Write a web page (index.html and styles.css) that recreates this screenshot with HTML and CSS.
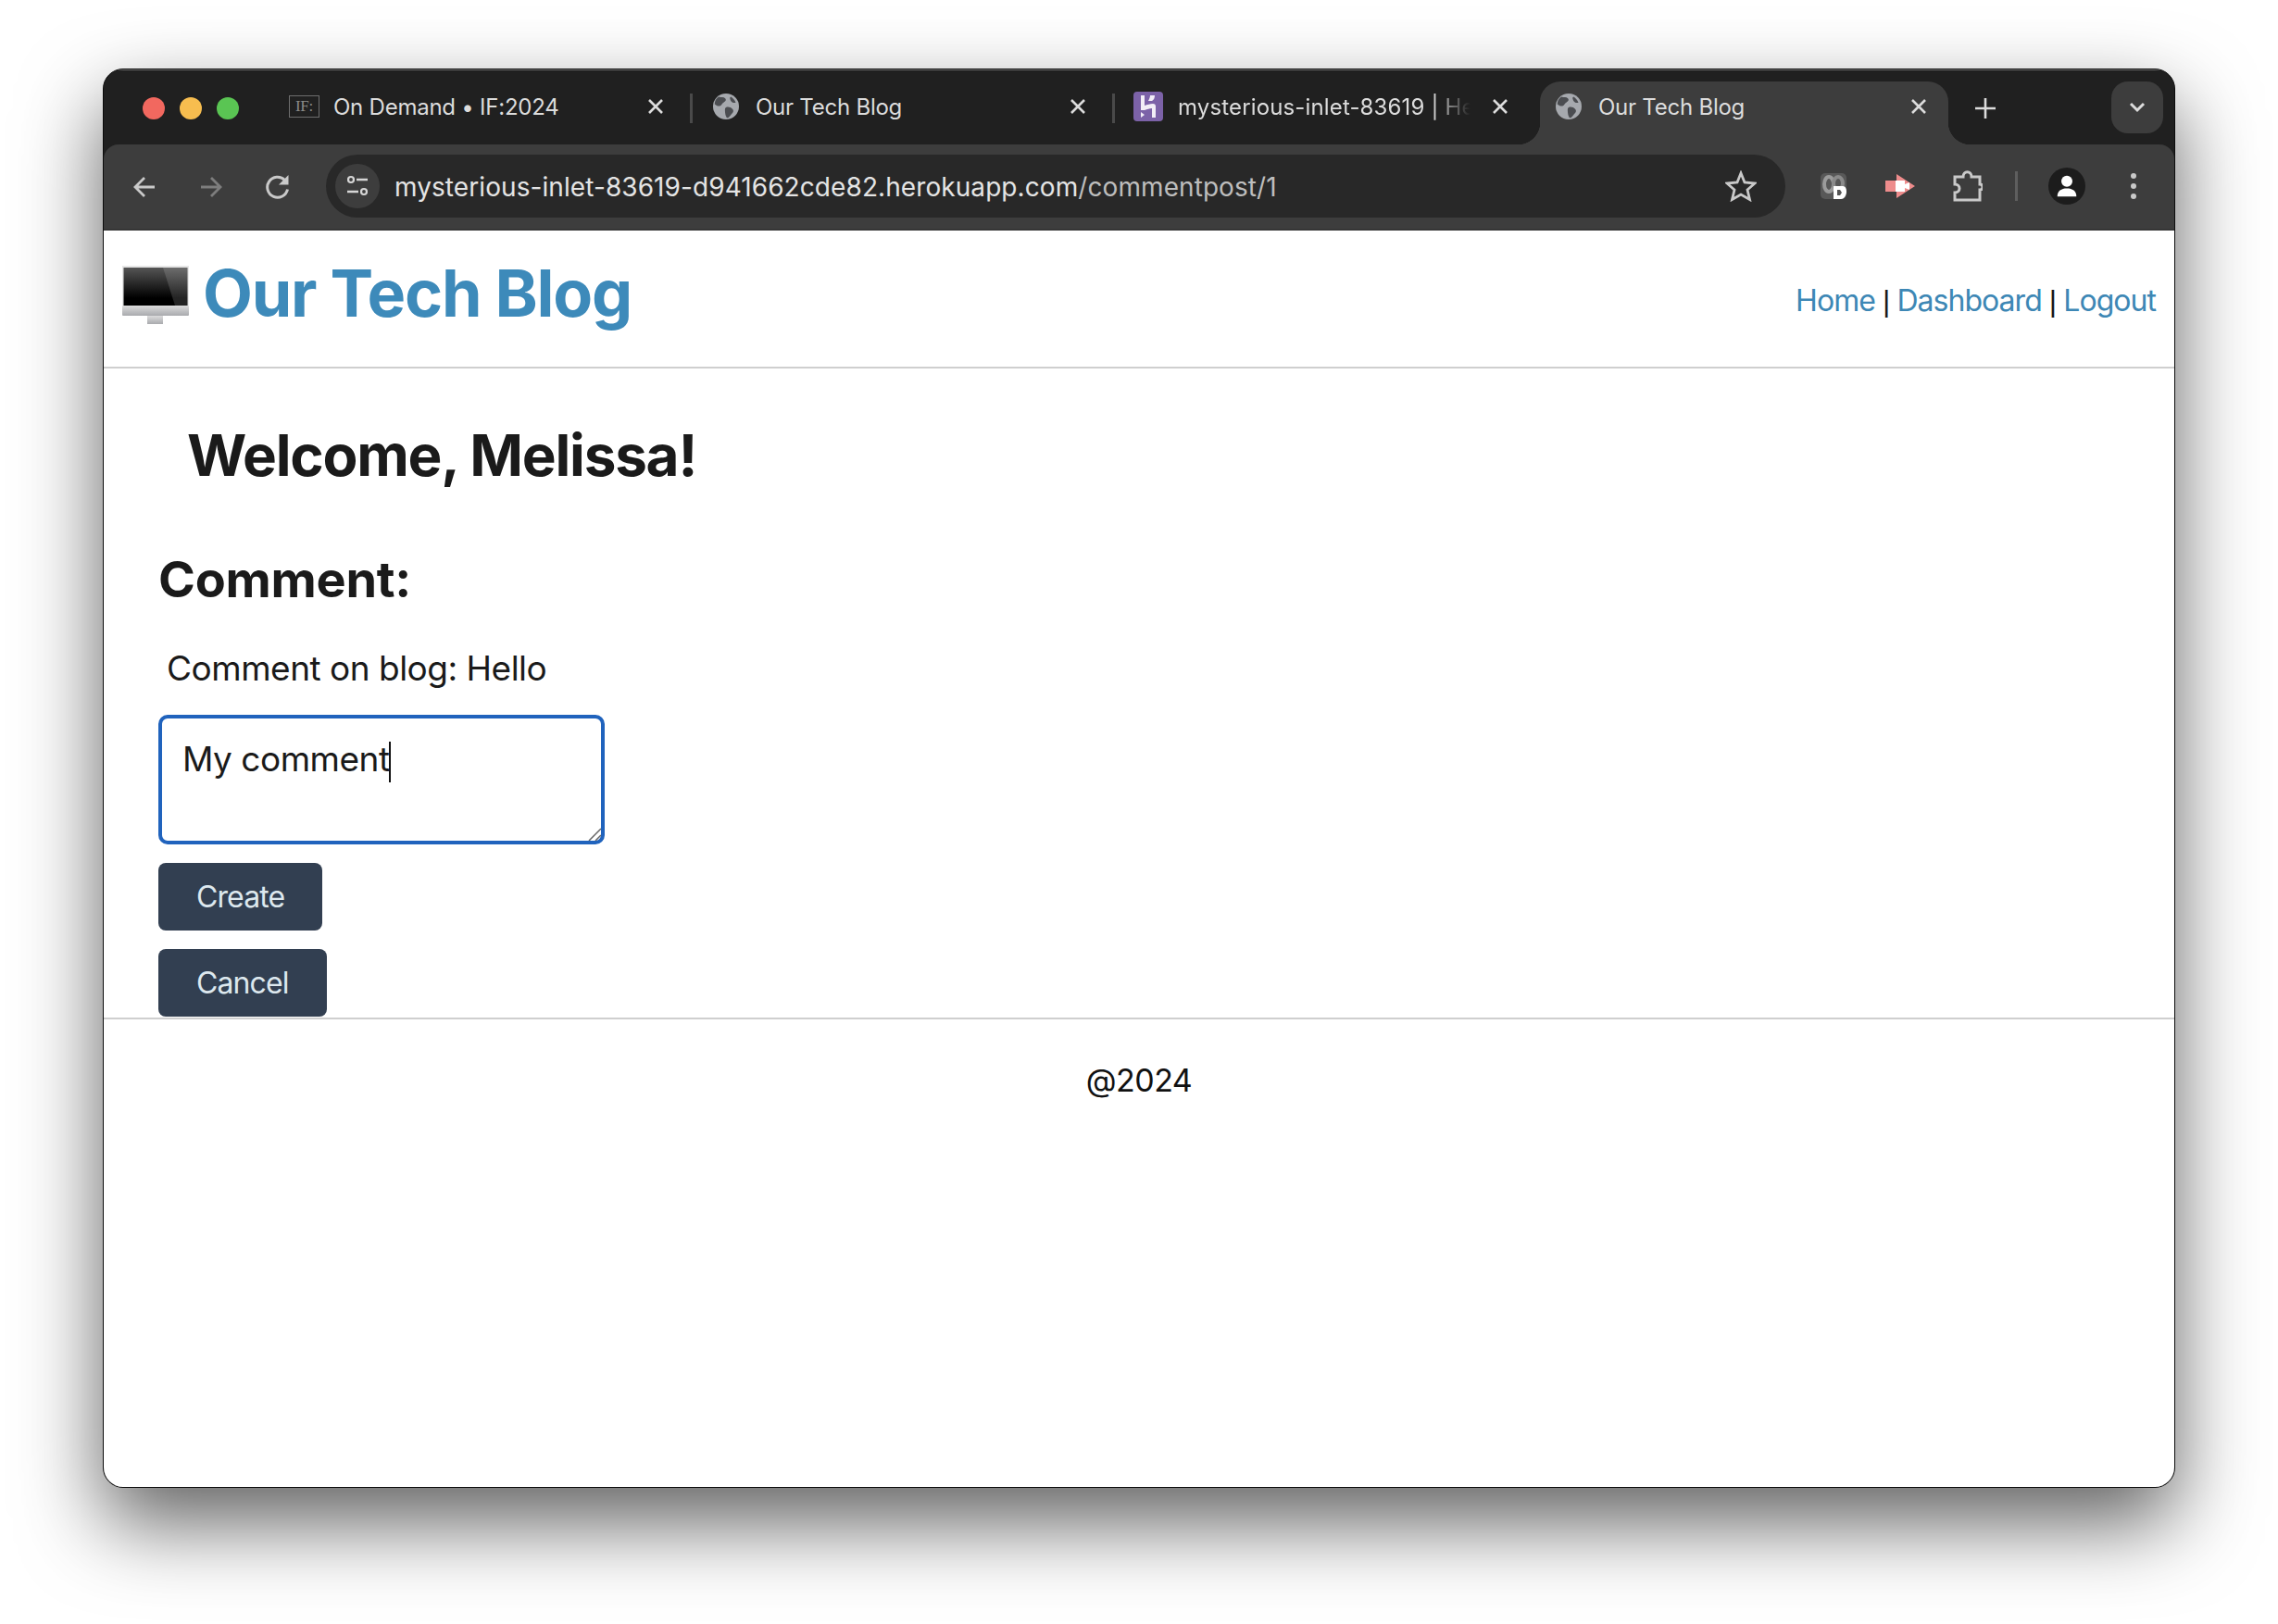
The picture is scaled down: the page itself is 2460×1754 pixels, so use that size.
FILE: index.html
```html
<!DOCTYPE html>
<html lang="en">
<head>
    <meta charset="UTF-8">
    <title>Our Tech Blog</title>
    <link rel="stylesheet" href="styles.css">
</head>
<body>
    <svg class="defs" width="0" height="0">
        <defs>
            <g id="globe">
                <circle cx="16" cy="16" r="16" fill="#a6a9ae"/>
                <path d="M7 4c3 1 6 0 8 2s0 4-2 5-2 3-4 4-5 0-7-2c0-4 2-7 5-9zM16 17c3-1 6 0 8 2s1 4-1 6-3 5-6 5c-1-2-2-4-2-6s-1-6 1-7zM22 4c2 1 5 4 6 7-2 1-5 0-6-2s-2-4 0-5z" fill="#4b4d51"/>
            </g>
            <path id="close" d="M2 2l14 14M16 2L2 16" fill="none" stroke="#dcdcdc" stroke-width="2.6"/>
        </defs>
    </svg>
    <div class="window">
        <div class="tabstrip">
            <div class="lights">
                <span class="light red"></span>
                <span class="light yellow"></span>
                <span class="light green"></span>
            </div>
            <div class="tab first">
                <span class="if-icon">IF:</span>
                <span class="tab-title">On Demand • IF:2024</span>
                <svg class="tab-close" viewBox="0 0 18 18"><use href="#close"/></svg>
            </div>
            <div class="tab-sep"></div>
            <div class="tab globe-tab">
                <svg class="favicon" viewBox="0 0 32 32"><use href="#globe"/></svg>
                <span class="tab-title">Our Tech Blog</span>
                <svg class="tab-close" viewBox="0 0 18 18"><use href="#close"/></svg>
            </div>
            <div class="tab-sep"></div>
            <div class="tab">
                <svg class="favicon" viewBox="0 0 32 32">
                    <rect width="32" height="32" rx="4" fill="#7c62a8"/>
                    <path d="M8 4h4v11c3-1 6-2 9-2 2 0 3 1 3 3v12h-4V18c-3 0-5 1-8 2H8zM18 4h5c0 3-1 5-3 6h-4c1-2 2-4 2-6zM8 22l4 3-4 3z" fill="#f2eef7"/>
                </svg>
                <span class="tab-title fade">mysterious-inlet-83619 | Heroku</span>
                <svg class="tab-close" viewBox="0 0 18 18"><use href="#close"/></svg>
            </div>
            <div class="tab globe-tab active">
                <svg class="favicon" viewBox="0 0 32 32"><use href="#globe"/></svg>
                <span class="tab-title">Our Tech Blog</span>
                <svg class="tab-close" viewBox="0 0 18 18"><use href="#close"/></svg>
            </div>
            <svg class="new-tab" viewBox="0 0 22 22"><path d="M11 0v22M0 11h22" stroke="#dcdcdc" stroke-width="2.6"/></svg>
            <div class="tab-search">
                <svg viewBox="0 0 18 12"><path d="M2 2l7 7 7-7" fill="none" stroke="#dcdcdc" stroke-width="3"/></svg>
            </div>
        </div>

        <div class="toolbar">
            <div class="nav-buttons">
                <svg class="nav-icon" viewBox="0 0 26 26"><path d="M24 13H4M13 3L3 13l10 10" fill="none" stroke="#c9c9c9" stroke-width="2.8"/></svg>
                <svg class="nav-icon" viewBox="0 0 26 26"><path d="M2 13h20M13 3l10 10-10 10" fill="none" stroke="#7d7d7d" stroke-width="2.8"/></svg>
                <svg class="nav-icon" viewBox="0 0 26 26"><path d="M23.500 15.500A11 11 0 1 1 20.500 5.500" fill="none" stroke="#c9c9c9" stroke-width="3"/><path d="M24.500 0v10.500H14z" fill="#c9c9c9"/></svg>
            </div>
            <div class="omnibox">
                <span class="site-settings">
                    <svg viewBox="0 0 26 26"><circle cx="6" cy="6" r="3" fill="none" stroke="#d6d6d6" stroke-width="2.200"/><path d="M12 6h12M2 19h12" stroke="#d6d6d6" stroke-width="2.400"/><circle cx="20" cy="19" r="3" fill="none" stroke="#d6d6d6" stroke-width="2.200"/></svg>
                </span>
                <span class="url">mysterious-inlet-83619-d941662cde82.herokuapp.com<span class="url-path">/commentpost/1</span></span>
                <svg class="star" viewBox="0 0 34 34"><path d="M17 3l4 10 11 1-8 7 2.500 10.500L17 26l-9.500 5.500L10 21l-8-7 11-1z" fill="none" stroke="#c9c9c9" stroke-width="2.800"/></svg>
            </div>
            <div class="extensions">
                <span class="ext-loom">
                    <svg viewBox="0 0 28 28">
                        <rect width="28" height="28" rx="5" fill="#585858"/>
                        <ellipse cx="9" cy="12" rx="5" ry="8" fill="none" stroke="#9b9b9b" stroke-width="4"/>
                        <ellipse cx="19" cy="11" rx="5" ry="7" fill="none" stroke="#8a8a8a" stroke-width="4"/>
                        <path d="M14 14h10c3 0 4 3 4 6s-2 8-6 8h-8z" fill="#fff"/>
                        <path d="M18 18h3l2 3-2 3h-3z" fill="#555"/>
                    </svg>
                </span>
                <svg class="ext-video" viewBox="0 0 32 26">
                    <path d="M12 0l20 13-20 13v-7H0V7h12z" fill="#ee8c8c"/>
                    <path d="M11 7h10v12H11z" fill="#fff"/>
                    <path d="M21 11l5-2v8l-5-2z" fill="#fff"/>
                </svg>
                <svg class="ext-puzzle" viewBox="0 0 32 34"><path d="M2 7h9c0-7 9-7 9 0h9v8c4 0 4 6 0 6v11H2v-8c3 0 5-2 5-4.500S5 15 2 15z" fill="none" stroke="#c9c9c9" stroke-width="3"/></svg>
                <span class="toolbar-sep"></span>
                <span class="avatar">
                    <svg viewBox="0 0 26 28"><circle cx="13" cy="8" r="7" fill="#fff"/><path d="M1 27c0-7 5-10 12-10s12 3 12 10z" fill="#fff"/></svg>
                </span>
                <span class="menu-dots"><i></i><i></i><i></i></span>
            </div>
        </div>

        <div class="page">
            <header class="site-header">
                <a class="brand" href="#">
                    <svg class="brand-icon" viewBox="0 0 72 63">
                        <defs>
                            <linearGradient id="screen" x1="0" y1="0" x2="0" y2="1">
                                <stop offset="0" stop-color="#555"/>
                                <stop offset="0.8" stop-color="#000"/>
                            </linearGradient>
                            <linearGradient id="chin" x1="0" y1="0" x2="0" y2="1">
                                <stop offset="0" stop-color="#dcdcdc"/>
                                <stop offset="1" stop-color="#a9aaae"/>
                            </linearGradient>
                        </defs>
                        <rect x="0" y="0" width="72" height="43" fill="#e6e6e6"/>
                        <rect x="1.500" y="2" width="69" height="41" fill="url(#screen)"/>
                        <path d="M44 2h26.500v41H57z" fill="#fff" opacity="0.14"/>
                        <rect x="0" y="43" width="72" height="11" rx="1" fill="url(#chin)"/>
                        <rect x="27" y="54" width="17" height="9" fill="url(#chin)"/>
                    </svg>
                    <span class="brand-name">Our Tech Blog</span>
                </a>
                <nav class="site-nav">
                    <a href="#">Home</a> <span class="pipe">|</span> <a href="#">Dashboard</a> <span class="pipe">|</span> <a href="#">Logout</a>
                </nav>
            </header>

            <main class="main">
                <h1 class="welcome">Welcome, Melissa!</h1>
                <h2 class="comment-heading">Comment:</h2>
                <p class="comment-on">Comment on blog: Hello</p>
                <div class="comment-box">My comment<span class="caret"></span>
                    <svg class="grip" viewBox="0 0 14 14"><path d="M1 14L14 1M8 14l6-6" stroke="#666" stroke-width="1.500"/></svg>
                </div>
                <button class="btn create">Create</button>
                <button class="btn cancel">Cancel</button>
            </main>

            <footer class="site-footer">@2024</footer>
        </div>
    </div>
</body>
</html>
```

FILE: styles.css
```css
* {
    box-sizing: border-box;
}

body {
    margin: 0;
    height: 1754px;
    padding: 74px 0 0 111px;
    background-color: #fff;
    font-family: Inter, 'Liberation Sans', sans-serif;
    overflow: hidden;
}

.defs {
    display: block;
    height: 0;
}

.window {
    width: 2238px;
    height: 1533px;
    display: flex;
    flex-direction: column;
    background-color: #202020;
    border: 1px solid #0c0c0c;
    border-radius: 22px;
    box-shadow: 0 38px 88px rgba(0, 0, 0, 0.62);
    overflow: hidden;
}

/* tab strip */
.tabstrip {
    height: 81px;
    display: flex;
    align-items: flex-end;
    background-color: #202020;
    box-shadow: inset 0 1px 0 #6b6b6b;
    color: #dcdcdc;
    font-size: 24px;
    letter-spacing: -0.01em;
}

.lights {
    width: 177px;
    height: 68px;
    padding: 0 0 10px 42px;
    display: flex;
    align-items: center;
    gap: 16px;
    flex-shrink: 0;
}

.light {
    width: 24px;
    height: 24px;
    border-radius: 50%;
}

.red { background-color: #f2685f; }
.yellow { background-color: #f7bd4f; }
.green { background-color: #5ac553; }

.tab {
    position: relative;
    width: 456px;
    height: 68px;
    display: flex;
    align-items: center;
    padding: 0 0 14px 23px;
    flex-shrink: 0;
}

.tab-sep {
    width: 3px;
    height: 32px;
    margin: 0 -3px 23px 0;
    background-color: #4a4a4a;
    position: relative;
    z-index: 1;
    flex-shrink: 0;
}

.if-icon {
    width: 33px;
    height: 24px;
    margin-right: 15px;
    border: 1.500px solid #6e6e6e;
    color: #8a8a8a;
    font-family: 'Liberation Serif', serif;
    font-size: 17px;
    line-height: 21px;
    text-align: center;
    flex-shrink: 0;
}

.favicon {
    width: 32px;
    height: 32px;
    margin-right: 16px;
    flex-shrink: 0;
}

.globe-tab {
    padding-left: 25px;
}

.globe-tab .favicon {
    width: 28px;
    height: 28px;
    margin-right: 18px;
}

.tab-title {
    flex: 1;
    min-width: 0;
    white-space: nowrap;
    overflow: hidden;
}

.tab-title.fade {
    letter-spacing: 0.006em;
    -webkit-mask-image: linear-gradient(to right, #000 86%, transparent 99%);
    mask-image: linear-gradient(to right, #000 86%, transparent 99%);
}

.tab-close {
    width: 18px;
    height: 18px;
    margin: 0 28px 0 20px;
    flex-shrink: 0;
}

.tab.active {
    width: 441px;
    margin-left: 6px;
    padding-left: 17px;
    background-color: #3d3d3d;
    border-radius: 22px 22px 0 0;
}

.tab.active .tab-close {
    margin-right: 23px;
}

.tab.active::before,
.tab.active::after {
    content: "";
    position: absolute;
    bottom: 0;
    width: 24px;
    height: 24px;
}

.tab.active::before {
    left: -24px;
    background: radial-gradient(circle at 0 0, transparent 24px, #3d3d3d 24.500px);
}

.tab.active::after {
    right: -24px;
    background: radial-gradient(circle at 100% 0, transparent 24px, #3d3d3d 24.500px);
}

.new-tab {
    width: 22px;
    height: 22px;
    margin: 0 0 28px 29px;
    flex-shrink: 0;
}

.tab-search {
    width: 56px;
    height: 56px;
    margin: 0 0 12px 125px;
    background-color: #3d3d3d;
    border-radius: 18px;
    display: flex;
    align-items: center;
    justify-content: center;
    flex-shrink: 0;
}

.tab-search svg {
    width: 18px;
    height: 12px;
}

/* toolbar */
.toolbar {
    height: 93px;
    display: flex;
    align-items: center;
    background-color: #3d3d3d;
    border-radius: 16px 16px 0 0;
    border-bottom: 2px solid #363636;
}

.nav-buttons {
    width: 240px;
    padding-left: 31px;
    display: flex;
    gap: 46px;
    flex-shrink: 0;
}

.nav-icon {
    width: 26px;
    height: 26px;
}

.omnibox {
    width: 1576px;
    height: 68px;
    margin-top: -2px;
    display: flex;
    align-items: center;
    background-color: #282828;
    border-radius: 34px;
    padding: 0 0 0 10px;
    flex-shrink: 0;
}

.site-settings {
    width: 48px;
    height: 48px;
    margin-right: 16px;
    background-color: #3d3d3d;
    border-radius: 50%;
    display: flex;
    align-items: center;
    justify-content: center;
    flex-shrink: 0;
}

.site-settings svg {
    width: 26px;
    height: 26px;
}

.url {
    flex: 1;
    padding-top: 2px;
    color: #e4e4e4;
    font-size: 28px;
    letter-spacing: 0.08px;
    white-space: nowrap;
}

.url-path {
    color: #bdbdbd;
}

.star {
    width: 34px;
    height: 34px;
    margin-right: 31px;
    flex-shrink: 0;
}

.extensions {
    flex: 1;
    display: flex;
    align-items: center;
    margin-top: -2px;
    padding-left: 38px;
}

.ext-loom svg {
    display: block;
    width: 28px;
    height: 28px;
}

.ext-video {
    width: 32px;
    height: 26px;
    margin-left: 42px;
}

.ext-puzzle {
    width: 32px;
    height: 34px;
    margin-left: 41px;
}

.toolbar-sep {
    width: 3px;
    height: 32px;
    margin-left: 35px;
    background-color: #5e5e5e;
}

.avatar {
    width: 40px;
    height: 40px;
    margin-left: 33px;
    background-color: #1c1c1c;
    border-radius: 50%;
    display: flex;
    align-items: center;
    justify-content: center;
}

.avatar svg {
    width: 24px;
    height: 24px;
}

.menu-dots {
    margin-left: 49px;
    display: flex;
    flex-direction: column;
    gap: 5px;
}

.menu-dots i {
    display: block;
    width: 6px;
    height: 6px;
    background-color: #c9c9c9;
    border-radius: 50%;
}

/* page */
.page {
    flex: 1;
    display: flex;
    flex-direction: column;
    background-color: #fff;
    color: #1a1a1a;
    letter-spacing: -0.031em;
}

.site-header {
    height: 149px;
    display: flex;
    align-items: center;
    justify-content: space-between;
    padding: 0 20px 0 20px;
    border-bottom: 2px solid #cfcfcf;
}

.brand {
    display: flex;
    align-items: center;
    margin-bottom: 12px;
    text-decoration: none;
}

.brand-icon {
    width: 72px;
    height: 63px;
    margin: 4px 15px 0 0;
    flex-shrink: 0;
}

.brand-name {
    color: #3d8aba;
    font-size: 70px;
    font-weight: 700;
    letter-spacing: -0.018em;
    line-height: 80px;
}

.site-nav {
    margin-top: 3px;
    font-size: 32px;
    letter-spacing: -0.03em;
    color: #1a1a1a;
}

.site-nav a {
    color: #3d87b5;
    text-decoration: none;
}

.pipe {
    font-family: 'Liberation Sans', sans-serif;
}

.main {
    height: 701px;
    padding: 0 0 0 59px;
}

.welcome {
    margin: 0 0 0 31px;
    padding-top: 56px;
    font-size: 62px;
    font-weight: 700;
    letter-spacing: -0.02em;
    line-height: 75px;
}

.comment-heading {
    margin: 0;
    padding-top: 66px;
    font-size: 54px;
    font-weight: 700;
    letter-spacing: -0.005em;
    line-height: 62px;
}

.comment-on {
    margin: 0;
    padding: 42px 0 0 9px;
    font-size: 37px;
    line-height: 46px;
}

.comment-box {
    position: relative;
    width: 482px;
    height: 140px;
    margin-top: 27px;
    padding: 21px 22px;
    border: 4px solid #2063bd;
    border-radius: 10px;
    font-size: 37px;
    line-height: 46px;
    white-space: nowrap;
}

.caret {
    display: inline-block;
    width: 2px;
    height: 44px;
    margin-left: -1px;
    background-color: #111;
    vertical-align: middle;
}

.grip {
    position: absolute;
    right: 0;
    bottom: 0;
    width: 14px;
    height: 14px;
}

.btn {
    display: block;
    height: 73px;
    padding: 0 41px;
    border: none;
    border-radius: 8px;
    background-color: #323f51;
    color: #dde8ee;
    font-family: inherit;
    font-size: 32px;
    letter-spacing: -0.028em;
}

.create {
    margin-top: 20px;
}

.cancel {
    margin-top: 20px;
}

.site-footer {
    border-top: 2px solid #cfcfcf;
    padding-top: 45px;
    color: #111;
    font-size: 34px;
    letter-spacing: -0.015em;
    line-height: 42px;
    text-align: center;
}
```
